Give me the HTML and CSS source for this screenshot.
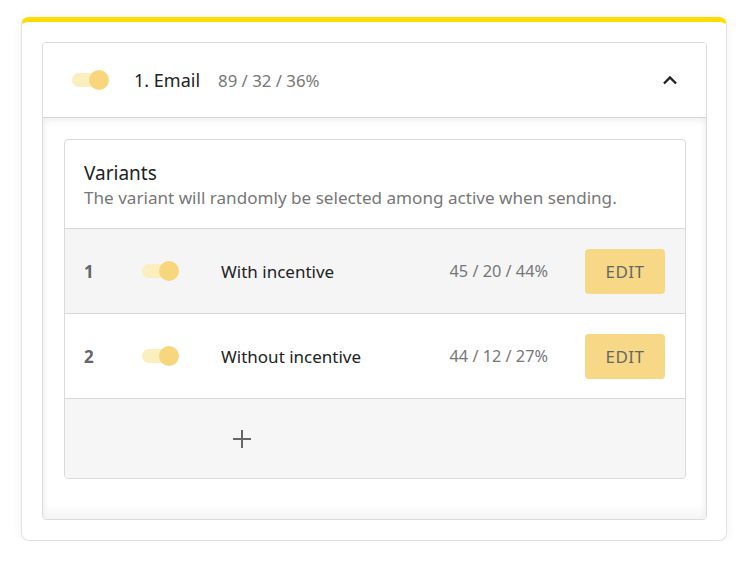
FILE: index.html
```html
<!DOCTYPE html>
<html lang="en">
<head>
    <meta charset="UTF-8">
    <meta name="viewport" content="width=device-width, initial-scale=1.0">
    <title>Email variants</title>
    <link rel="stylesheet" href="styles.css">
</head>
<body>
    <div class="card">
        <div class="panel">
            <div class="panel-header">
                <span class="toggle"><span class="knob"></span></span>
                <span class="step-name">1. Email</span>
                <span class="step-stats">89 / 32 / 36%</span>
                <svg class="chevron" width="16" height="10" viewBox="0 0 16 10">
                    <path d="M2 8.5 L8 2.5 L14 8.5" fill="none" stroke="#222" stroke-width="2.4"/>
                </svg>
            </div>
            <div class="panel-body">
                <div class="variants">
                    <div class="variants-head">
                        <div class="variants-title">Variants</div>
                        <div class="variants-sub">The variant will randomly be selected among active when sending.</div>
                    </div>
                    <div class="variant-row shaded">
                        <span class="num">1</span>
                        <span class="toggle"><span class="knob"></span></span>
                        <span class="name">With incentive</span>
                        <span class="stats">45 / 20 / 44%</span>
                        <button class="edit">EDIT</button>
                    </div>
                    <div class="variant-row">
                        <span class="num">2</span>
                        <span class="toggle"><span class="knob"></span></span>
                        <span class="name">Without incentive</span>
                        <span class="stats">44 / 12 / 27%</span>
                        <button class="edit">EDIT</button>
                    </div>
                    <div class="add-row">
                        <svg width="20" height="20" viewBox="0 0 20 20">
                            <path d="M10 1 V19 M1 10 H19" stroke="#666" stroke-width="2"/>
                        </svg>
                    </div>
                </div>
            </div>
        </div>
    </div>
</body>
</html>
```

FILE: styles.css
```css
body {
    font-family: "Noto Sans", Arial, sans-serif;
    margin: 0;
    padding: 17px 17px 0 21px;
    background-color: #fff;
    color: #333;
}

.card {
    width: 706px;
    box-sizing: border-box;
    border: 1px solid #e2e2e2;
    border-top: 5px solid #ffdd00;
    border-radius: 8px;
    padding: 20px 19px 20px 20px;
    box-shadow: 0 0 12px rgba(0, 0, 0, 0.05);
}

.panel {
    border: 1px solid #dcdcdc;
    border-radius: 4px;
    overflow: hidden;
}

.panel-header {
    height: 74px;
    display: flex;
    align-items: center;
    padding: 0 28px 0 29px;
    border-bottom: 1px solid #d6d6d6;
    background: #fff;
}

.toggle {
    position: relative;
    display: inline-block;
    width: 36px;
    height: 14px;
    border-radius: 7px;
    background: #fbeebf;
}

.knob {
    position: absolute;
    right: -1px;
    top: -3px;
    width: 20px;
    height: 20px;
    border-radius: 50%;
    background: #f7d67c;
}

.step-name {
    margin-left: 26px;
    font-size: 18px;
    color: #222;
}

.step-stats {
    margin-left: 18px;
    font-size: 16.8px;
    color: #777;
}

.chevron {
    margin-left: auto;
}

.panel-body {
    padding: 21px 20px 40px 21px;
    background: #fff;
    box-shadow: inset 0 3px 6px rgba(0, 0, 0, 0.06), inset 0 -8px 10px rgba(0, 0, 0, 0.04);
}

.variants {
    border: 1px solid #dadada;
    border-radius: 4px;
    background: #fff;
    overflow: hidden;
}

.variants-head {
    height: 89px;
    box-sizing: border-box;
    padding: 20px 19px 0 19px;
    border-bottom: 1px solid #d8d8d8;
}

.variants-title {
    font-size: 19px;
    color: #222;
    line-height: 26px;
}

.variants-sub {
    font-size: 17.1px;
    color: #777;
    line-height: 24px;
}

.variant-row {
    height: 84px;
    display: flex;
    align-items: center;
    padding: 0 20px 0 19px;
    border-bottom: 1px solid #d8d8d8;
    font-size: 17px;
}

.variant-row.shaded {
    background: #f5f5f5;
}

.num {
    width: 58px;
    font-weight: bold;
    color: #666;
}

.name {
    margin-left: 43px;
    width: 227px;
    color: #222;
}

.stats {
    color: #777;
    font-size: 16.3px;
    margin-left: auto;
    margin-right: 37px;
}

.edit {
    width: 80px;
    height: 45px;
    border: none;
    border-radius: 4px;
    background: #f7d886;
    color: #666;
    font-family: inherit;
    font-size: 17px;
    letter-spacing: 0.5px;
}

.add-row {
    height: 79px;
    display: flex;
    align-items: center;
    padding-left: 167px;
    background: #f6f6f6;
}
```
